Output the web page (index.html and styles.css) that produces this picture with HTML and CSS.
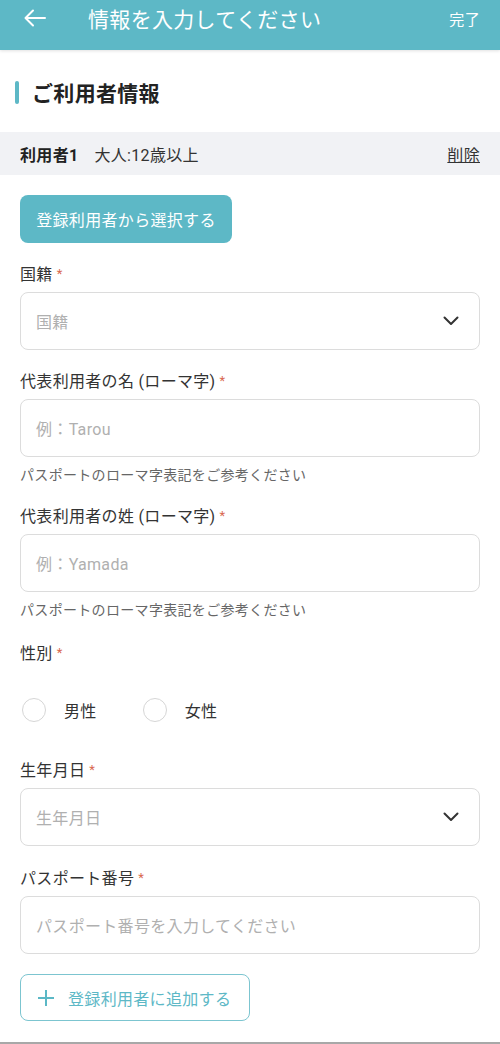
FILE: index.html
```html
<!DOCTYPE html>
<html lang="ja">
<head>
  <meta charset="utf-8">
  <title>情報を入力してください</title>
  <meta name="viewport" content="width=device-width, initial-scale=1">
  <link rel="stylesheet" href="styles.css">
</head>
<body>

  <header class="topbar">
    <svg class="back" width="22" height="18" viewBox="0 0 22 18">
      <path d="M21 9H2M9 1.5L1.5 9 9 16.5" fill="none" stroke="#fff" stroke-width="2" stroke-linecap="round" stroke-linejoin="round"/>
    </svg>
    <h1>情報を入力してください</h1>
    <span class="done">完了</span>
  </header>

  <h2 class="section-title"><span class="mark"></span>ご利用者情報</h2>

  <div class="member-row">
    <strong>利用者1</strong>
    <span class="age">大人:12歳以上</span>
    <a class="delete">削除</a>
  </div>

  <div class="form">
    <button class="pick-btn">登録利用者から選択する</button>

    <div class="field first">
      <label>国籍<i>*</i></label>
      <div class="box select"><span class="ph">国籍</span><svg width="16" height="10" viewBox="0 0 16 10"><path d="M1.5 1.5L8 8l6.5-6.5" fill="none" stroke="#333" stroke-width="2" stroke-linecap="round" stroke-linejoin="round"/></svg></div>
    </div>

    <div class="field">
      <label>代表利用者の名 (ローマ字)<i>*</i></label>
      <div class="box"><span class="ph">例：Tarou</span></div>
      <p class="hint">パスポートのローマ字表記をご参考ください</p>
    </div>

    <div class="field">
      <label>代表利用者の姓 (ローマ字)<i>*</i></label>
      <div class="box"><span class="ph">例：Yamada</span></div>
      <p class="hint">パスポートのローマ字表記をご参考ください</p>
    </div>

    <div class="field gender">
      <label>性別<i>*</i></label>
      <div class="radios">
        <span class="radio"><span class="circle"></span>男性</span>
        <span class="radio"><span class="circle"></span>女性</span>
      </div>
    </div>

    <div class="field after-radio">
      <label>生年月日<i>*</i></label>
      <div class="box select"><span class="ph">生年月日</span><svg width="16" height="10" viewBox="0 0 16 10"><path d="M1.5 1.5L8 8l6.5-6.5" fill="none" stroke="#333" stroke-width="2" stroke-linecap="round" stroke-linejoin="round"/></svg></div>
    </div>

    <div class="field passport">
      <label>パスポート番号<i>*</i></label>
      <div class="box"><span class="ph">パスポート番号を入力してください</span></div>
    </div>

    <button class="add-btn">
      <svg width="18" height="18" viewBox="0 0 18 18"><path d="M9 1v16M1 9h16" stroke="#5bb8c6" stroke-width="2"/></svg>
      <span>登録利用者に追加する</span>
    </button>
  </div>

  <div class="bottom-line"></div>

</body>
</html>
```

FILE: styles.css
```css
html, body {
  margin: 0;
  padding: 0;
}

body {
  width: 500px;
  height: 1044px;
  overflow: hidden;
  position: relative;
  background: #fff;
  color: #333;
  font-family: Roboto, "Noto Sans CJK JP", sans-serif;
  letter-spacing: 0.02em;
}

.topbar {
  height: 50px;
  background-color: #5db8c6;
  color: #fff;
  display: flex;
  align-items: center;
  padding: 0 20px 0 24px;
  box-shadow: 0 1px 3px rgba(0, 0, 0, 0.12);
  box-sizing: border-box;
}
.topbar .back {
  margin-top: -14px;
  margin-right: 42px;
}
.topbar h1 {
  margin: -14px 0 0 0;
  font-size: 21px;
  font-weight: normal;
}
.topbar .done {
  margin: -14px 0 0 auto;
  font-size: 15px;
}

.section-title {
  display: flex;
  align-items: center;
  gap: 13px;
  margin: 20px 0 0 0;
  padding-left: 15px;
  height: 44px;
  font-size: 21px;
  font-weight: bold;
  color: #222;
}
.section-title .mark {
  width: 4px;
  height: 23px;
  border-radius: 2px;
  background-color: #5db8c6;
}

.member-row {
  margin-top: 18px;
  height: 43px;
  background-color: #f1f2f5;
  display: flex;
  align-items: center;
  padding: 0 20px;
  font-size: 16px;
}
.member-row strong {
  color: #222;
}
.member-row .age {
  margin-left: 16px;
}
.member-row .delete {
  margin-left: auto;
  text-decoration: underline;
  color: #333;
}

.form {
  padding: 0 20px;
}

.pick-btn {
  display: block;
  margin-top: 20px;
  height: 48px;
  width: 212px;
  padding: 0;
  border: none;
  border-radius: 8px;
  background-color: #5db8c6;
  color: #fff;
  font-family: inherit;
  letter-spacing: 0.02em;
  font-size: 16px;
}

.field {
  margin-top: 21px;
}
.field.gender {
  margin-top: 23px;
}
.field.after-radio {
  margin-top: 38px;
}
.field.passport {
  margin-top: 22px;
}
.field label {
  display: block;
  height: 22px;
  font-size: 16px;
  line-height: 22px;
  color: #333;
}
.field label i {
  font-style: normal;
  color: #d9684f;
  font-size: 13px;
  line-height: 0;
  margin-left: 4px;
  vertical-align: 2px;
}

.box {
  margin-top: 6px;
  height: 58px;
  box-sizing: border-box;
  border: 1px solid #dcdcdc;
  border-radius: 8px;
  display: flex;
  align-items: center;
  padding: 0 20px 0 15px;
}
.box .ph {
  font-size: 16px;
  color: #b0b0b0;
}
.box.select {
  justify-content: space-between;
}

.hint {
  margin: 8px 0 0 0;
  height: 20px;
  font-size: 14px;
  line-height: 20px;
  color: #666;
}

.radios {
  margin-top: 33px;
  display: flex;
  gap: 46px;
  padding-left: 2px;
  height: 24px;
}
.radio {
  display: flex;
  align-items: center;
  gap: 18px;
  font-size: 16px;
}
.radio .circle {
  width: 22px;
  height: 22px;
  border: 1px solid #d6d6d6;
  border-radius: 50%;
}

.add-btn {
  margin-top: 20px;
  height: 47px;
  width: 230px;
  box-sizing: border-box;
  display: flex;
  align-items: center;
  gap: 13px;
  padding: 0 16px;
  background: #fff;
  border: 1.5px solid #7cc5d0;
  border-radius: 8px;
  color: #5db8c6;
  font-family: inherit;
  letter-spacing: 0.02em;
  font-size: 16px;
  white-space: nowrap;
}

.bottom-line {
  position: absolute;
  left: 0;
  right: 0;
  bottom: 0;
  height: 2px;
  background-color: #a8a8a8;
}
```
